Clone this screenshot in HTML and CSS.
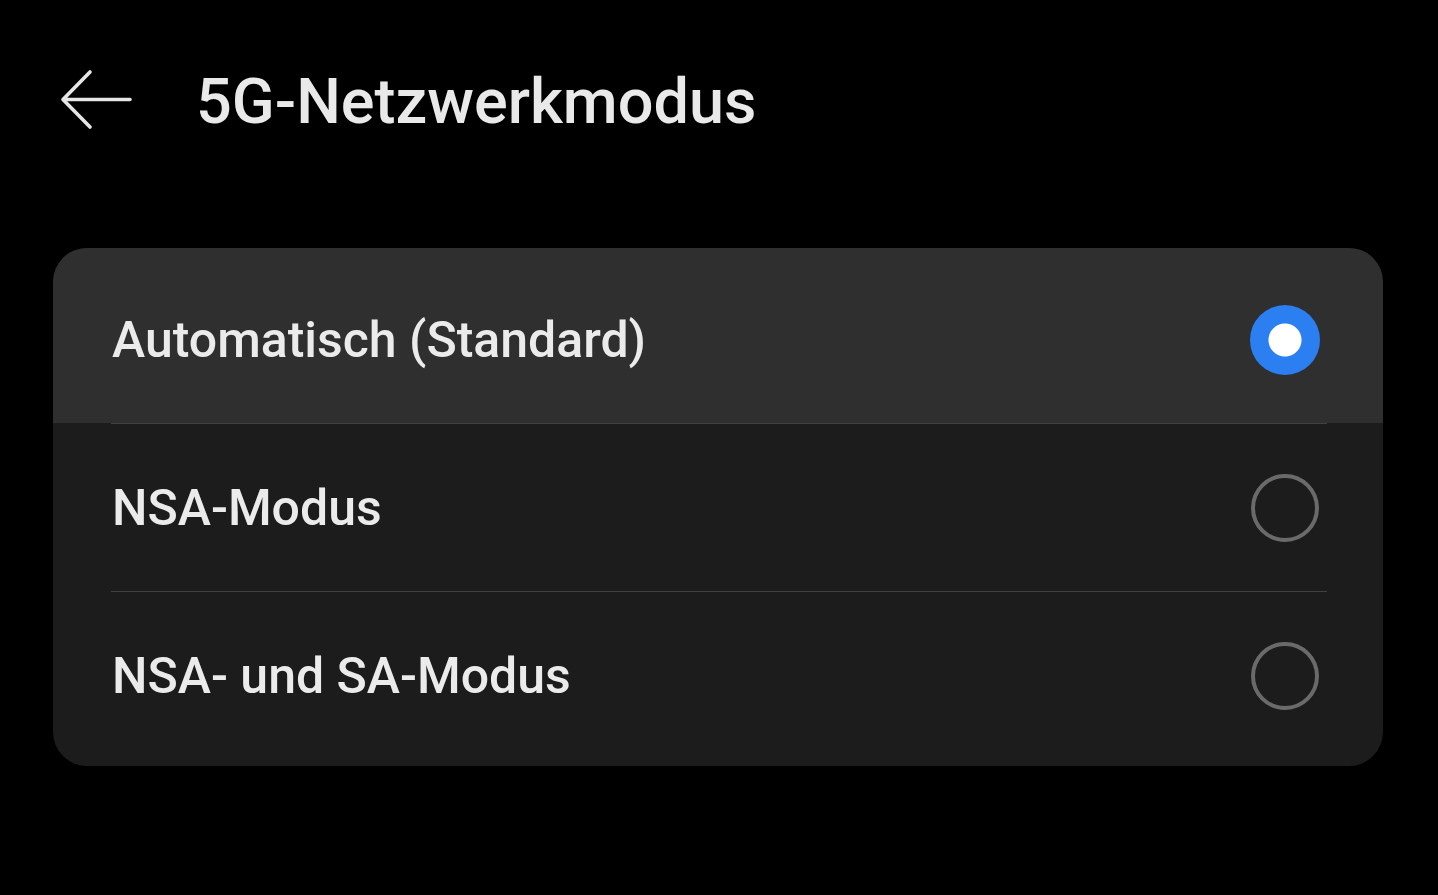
FILE: index.html
```html
<!DOCTYPE html>
<html lang="de">
<head>
<meta charset="utf-8">
<title>5G-Netzwerkmodus</title>
<link rel="stylesheet" href="styles.css">
</head>
<body>
<div class="screen">
  <header class="header">
    <svg class="back" width="74" height="62" viewBox="0 0 74 62" aria-hidden="true">
      <path d="M30 3 L3 30.5 L30 58 M3 30.5 H70" fill="none" stroke="#e6e6e6" stroke-width="3.6" stroke-linecap="round" stroke-linejoin="round"/>
    </svg>
    <h1 class="title">5G-Netzwerkmodus</h1>
  </header>
  <section class="card">
    <div class="row selected first">
      <span class="label">Automatisch (Standard)</span>
      <span class="radio on"></span>
    </div>
    <div class="divider"></div>
    <div class="row">
      <span class="label">NSA-Modus</span>
      <span class="radio"></span>
    </div>
    <div class="divider"></div>
    <div class="row last">
      <span class="label">NSA- und SA-Modus</span>
      <span class="radio"></span>
    </div>
  </section>
</div>
</body>
</html>
```
FILE: styles.css
```css
html, body {
  margin: 0;
  padding: 0;
  background: #000;
}
body {
  font-family: Roboto, "Noto Sans", "Liberation Sans", sans-serif;
  color: #ebebeb;
}
.screen {
  width: 1438px;
  height: 895px;
  overflow: hidden;
  padding-top: 70px;
  box-sizing: border-box;
}
.header {
  display: flex;
  align-items: center;
  padding-left: 60px;
  height: 63px;
}
.back {
  display: block;
  flex: none;
  margin-top: -3px;
}
.title {
  margin: 0 0 0 62px;
  font-size: 63px;
  line-height: 63px;
  font-weight: 500;
  letter-spacing: 0;
  color: #e9e9e9;
}
.card {
  margin: 115px 0 0 53px;
  width: 1330px;
  background: #1c1c1c;
  border-radius: 34px;
  overflow: hidden;
  padding-bottom: 6px;
}
.row {
  display: flex;
  align-items: center;
  justify-content: space-between;
  height: 167px;
  padding: 0 63px 0 59px;
}
.row.first {
  padding-top: 8px;
}
.row.last {
  height: 168px;
}
.row.selected {
  background: #2f2f2f;
}
.label {
  font-size: 50px;
  line-height: 50px;
  font-weight: 500;
  color: #ebebeb;
}
.divider {
  height: 1px;
  margin: 0 56px 0 58px;
  background: #404040;
}
.radio {
  width: 60px;
  height: 60px;
  border: 4px solid #6a6a6a;
  border-radius: 50%;
  flex: none;
  box-sizing: content-box;
  margin-right: 1px;
}
.radio.on {
  width: 70px;
  height: 70px;
  border: none;
  background: radial-gradient(circle, #ffffff 0 16px, #2b7ff0 17px);
  margin-right: 0;
}
```
